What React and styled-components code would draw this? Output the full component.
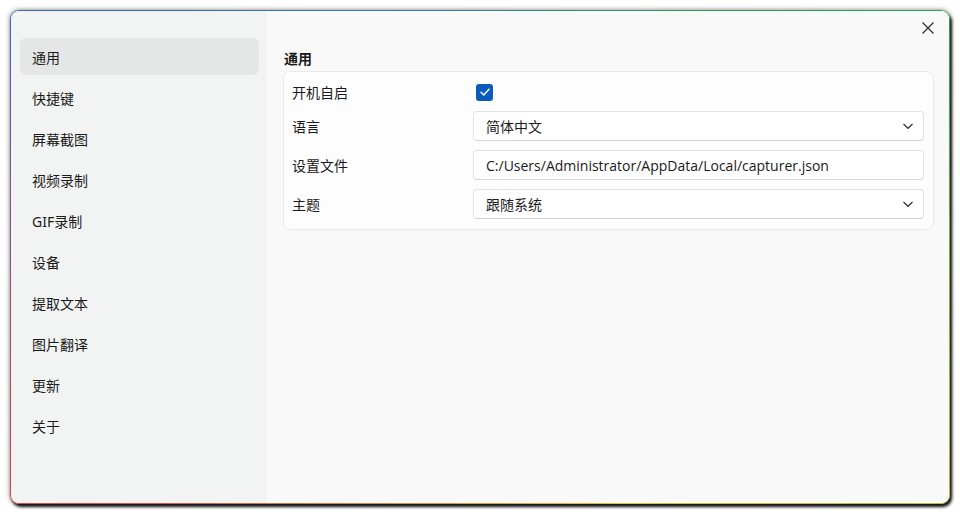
import React, { useState } from 'react';
import styled, { createGlobalStyle } from 'styled-components';

const GlobalStyle = createGlobalStyle`
  html, body {
    margin: 0;
    padding: 0;
    background: #ffffff;
  }
  body {
    font-family: "Noto Sans", "Noto Sans CJK SC", sans-serif;
    font-size: 14px;
    color: #1b1b1b;
  }
  * { box-sizing: border-box; }
`;

const menu = ['通用', '快捷键', '屏幕截图', '视频录制', 'GIF录制', '设备', '提取文本', '图片翻译', '更新', '关于'];

const App = () => {
  const [active, setActive] = useState(0);
  const [autoStart, setAutoStart] = useState(true);

  return (
    <>
      <GlobalStyle />
      <Page>
        <Window>
          <Sidebar>
            {menu.map((m, i) => (
              <MenuItem key={m} active={i === active} onClick={() => setActive(i)}>
                {m}
              </MenuItem>
            ))}
          </Sidebar>
          <Main>
            <TopBar>
              <CloseButton aria-label="close">
                <svg width="12" height="12" viewBox="0 0 12 12">
                  <path d="M0.5 0.5 L11.5 11.5 M11.5 0.5 L0.5 11.5" stroke="#2b2b2b" strokeWidth="1.2" fill="none" />
                </svg>
              </CloseButton>
            </TopBar>
            <SectionTitle>通用</SectionTitle>
            <Card>
              <Row short>
                <Label>开机自启</Label>
                <CheckBox checked={autoStart} onClick={() => setAutoStart(!autoStart)}>
                  {autoStart && (
                    <svg width="12" height="12" viewBox="0 0 12 12">
                      <path d="M2 6.3 L4.8 9 L10 3.2" stroke="#fff" strokeWidth="1.4" fill="none" strokeLinecap="round" strokeLinejoin="round" />
                    </svg>
                  )}
                </CheckBox>
              </Row>
              <Row>
                <Label>语言</Label>
                <Field>
                  <FieldText>简体中文</FieldText>
                  <Chevron />
                </Field>
              </Row>
              <Row>
                <Label>设置文件</Label>
                <Field>
                  <FieldText latin>C:/Users/Administrator/AppData/Local/capturer.json</FieldText>
                </Field>
              </Row>
              <Row>
                <Label>主题</Label>
                <Field>
                  <FieldText>跟随系统</FieldText>
                  <Chevron />
                </Field>
              </Row>
            </Card>
          </Main>
        </Window>
      </Page>
    </>
  );
};

const Chevron = () => (
  <svg width="12" height="12" viewBox="0 0 12 12">
    <path d="M1.5 4 L6 8.3 L10.5 4" stroke="#333" strokeWidth="1.2" fill="none" />
  </svg>
);

export default App;

const Page = styled.div`
  width: 960px;
  height: 514px;
  padding: 10px;
`;

const Window = styled.div`
  width: 940px;
  height: 494px;
  display: flex;
  border: 1px solid transparent;
  border-radius: 9px;
  background:
    linear-gradient(#f9f9f9, #f9f9f9) padding-box,
    conic-gradient(from 0deg, #3a8a8a 0deg, #2aa850 62deg, #c0b840 118deg, #e0c030 150deg, #d08050 210deg, #d84a4a 242deg, #8a5090 275deg, #3a6ac8 300deg, #3a80b0 360deg) border-box;
  box-shadow: 2px 3px 3px rgba(0, 0, 0, 0.9), 0 0 5px rgba(0, 0, 0, 0.55);
  overflow: hidden;
`;

const Sidebar = styled.div`
  width: 256px;
  flex-shrink: 0;
  background: #f2f4f3;
  padding: 27px 8px 0 9px;
  display: flex;
  flex-direction: column;
  gap: 4px;
  border-radius: 8px 0 0 8px;
`;

const MenuItem = styled.div`
  height: 37px;
  display: flex;
  align-items: center;
  padding-left: 12px;
  border-radius: 6px;
  font-family: "Noto Sans", "Noto Sans CJK SC", sans-serif;
  font-size: 14px;
  color: #1a1a1a;
  background: ${(p) => (p.active ? '#e5e6e6' : 'transparent')};
  cursor: default;
`;

const Main = styled.div`
  flex: 1;
  display: flex;
  flex-direction: column;
  padding: 0 15px 0 16px;
  background: #f9f9f9;
`;

const TopBar = styled.div`
  height: 36px;
  display: flex;
  justify-content: flex-end;
  align-items: flex-start;
  padding-top: 11px;
`;

const CloseButton = styled.div`
  width: 12px;
  height: 12px;
  display: flex;
  svg { display: block; }
`;

const SectionTitle = styled.div`
  font-weight: 600;
  font-size: 14px;
  color: #1a1a1a;
  height: 24px;
  line-height: 24px;
  padding-left: 1px;
`;

const Card = styled.div`
  background: #fdfdfd;
  border: 1px solid #e9e9e9;
  border-radius: 7px;
  padding: 10px 9px 10px 8px;
  display: flex;
  flex-direction: column;
  gap: 9px;
`;

const Row = styled.div`
  display: grid;
  grid-template-columns: 181px 1fr;
  align-items: center;
  height: ${(p) => (p.short ? '20px' : '30px')};
`;

const Label = styled.div`
  font-size: 14px;
  color: #1a1a1a;
`;

const CheckBox = styled.div`
  width: 17px;
  height: 17px;
  margin-left: 3px;
  border-radius: 3px;
  background: ${(p) => (p.checked ? '#0b5cb9' : '#fff')};
  border: ${(p) => (p.checked ? 'none' : '1px solid #888')};
  display: flex;
  align-items: center;
  justify-content: center;
`;

const Field = styled.div`
  height: 30px;
  background: #fff;
  border: 1px solid #e2e2e2;
  border-bottom-color: #d4d4d4;
  border-radius: 4px;
  display: flex;
  align-items: center;
  justify-content: space-between;
  padding: 0 9px 0 12px;
`;

const FieldText = styled.span`
  font-family: ${(p) => (p.latin ? '"Open Sans", "Noto Sans CJK SC", sans-serif' : '"Noto Sans", "Noto Sans CJK SC", sans-serif')};
  font-size: 14px;
  color: #1a1a1a;
`;
